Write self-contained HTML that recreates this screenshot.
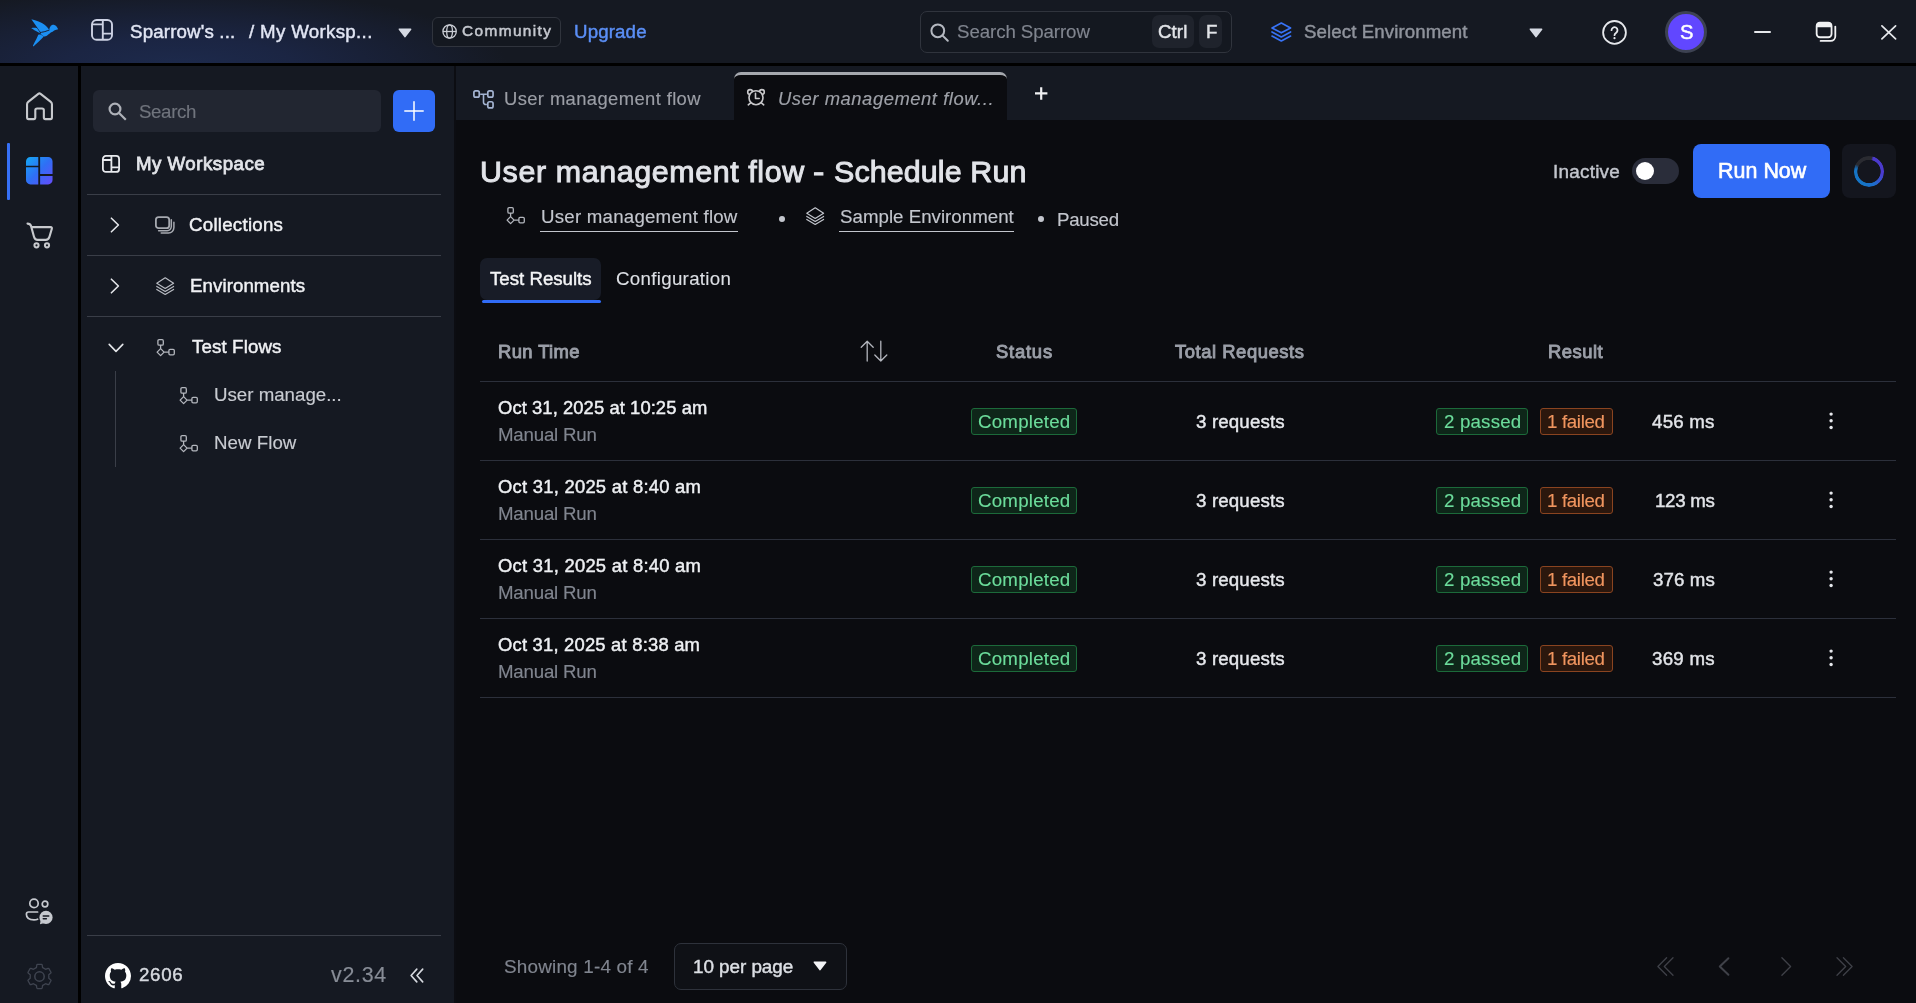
<!DOCTYPE html>
<html lang="en">
<head>
<meta charset="utf-8">
<title>Sparrow - User management flow - Schedule Run</title>
<style>
*{box-sizing:border-box;margin:0;padding:0}
html,body{width:1916px;height:1003px;overflow:hidden;background:#0b0c10}
body{font-family:"Liberation Sans",sans-serif;color:#e1e3e7;position:relative}
.a{position:absolute}
.t{position:absolute;white-space:nowrap;line-height:1;font-size:18px;will-change:transform}
svg{position:absolute;overflow:visible}
#hdr{left:0;top:0;width:1916px;height:63px;background:radial-gradient(ellipse 330px 78px at 178px 66px,#1d2a4c 0%,#1b2543 35%,#181f33 68%,#151922 100%)}
#hdrb{left:0;top:63px;width:1916px;height:3px;background:#000}
#rail{left:0;top:66px;width:78px;height:937px;background:#151922}
#railb{left:78px;top:66px;width:3px;height:937px;background:#000}
#side{left:81px;top:66px;width:374px;height:937px;background:#151922}
#sideb{left:454px;top:66px;width:2px;height:937px;background:#0c0d12}
#tabs{left:456px;top:66px;width:1460px;height:54px;background:#151922}
#main{left:456px;top:120px;width:1460px;height:883px;background:#0b0c10}
.hl{position:absolute;height:1px;background:#2b2f38}
</style>
</head>
<body>
<div class="a" id="hdr"></div>
<div class="a" id="hdrb"></div>
<div class="a" id="rail"></div>
<div class="a" id="railb"></div>
<div class="a" id="side"></div>
<div class="a" id="sideb"></div>
<div class="a" id="tabs"></div>
<div class="a" id="main"></div>

<!--HEADER-->
<svg style="left:24px;top:12px" width="42" height="42" viewBox="0 0 42 42" fill="#1b8ff2"><path d="M7.4 7.2C12 8.4 17.6 10.2 20.6 12.8C22.6 14.5 24.2 16.2 25 17.5L24.4 18.1C22 18.9 19.2 19.7 16.9 19.9L16 19.6Z"/><path d="M7.2 16.3C9 15.7 11.2 15.7 13.1 16.3L15.9 20.5L15.6 20.9C13.8 20 12 18.9 10.4 18.2C9.3 17.3 8.2 16.8 7.2 16.3Z"/><path d="M17 20.7C19.6 20.4 22.6 19.6 25.4 18.5C25.2 17.4 25.5 15.6 26.4 14.4C27.4 13.1 29 12.6 30.4 13C31.6 13.4 32.4 14.1 32.9 14.9L34.2 17.2L31.4 17.9L30.2 18.4C29.2 19.3 28 20 26.8 20.6C25.4 21.8 23.8 23.2 22.4 24C21.6 24.4 20.8 24.5 20 24.4C18.6 23.6 17.4 22.6 16.6 21.7Z"/><path d="M14.3 22.7C15.2 22.3 16 22.3 16.6 22.6C17.6 23.4 18.6 24 19.8 24.5C18.2 26.4 16.2 28.2 14.3 29.9C12.6 31.4 11 33 9.4 34.6L8.9 33.8C10 31.4 11.2 29 12.5 26.8C13.1 25.4 13.7 24 14.3 22.7Z"/></svg>
<svg style="left:91px;top:19.2px" width="22" height="22" viewBox="0 0 22 22" fill="none" stroke="#cdd2e4" stroke-width="1.9"><rect x="1" y="1" width="20" height="19.8" rx="4.6"/><path d="M11.8 1V20.8M1 5.4H11.8M11.8 14.6H21"/></svg>
<div class="t" id="t1" style="left:129.70px;top:23px;font-size:18.70px;color:#e2e6f4;letter-spacing:0.164px;-webkit-text-stroke:0.45px #e2e6f4;">Sparrow's ...</div>
<div class="t" id="t2" style="left:248.80px;top:23px;font-size:18.70px;color:#e2e6f4;letter-spacing:0.328px;-webkit-text-stroke:0.45px #e2e6f4;">/ My Worksp...</div>
<svg style="left:398.3px;top:27.8px" width="14" height="10" viewBox="0 0 14 10"><path d="M1.4 1.2H12.6L7 8.6Z" fill="#d5d9e3" stroke="#d5d9e3" stroke-width="1.6" stroke-linejoin="round"/></svg>
<div class="a" style="left:432.3px;top:17.3px;width:128.7px;height:29.4px;border:1px solid #30343d;border-radius:6px;background:#141820"></div>
<svg style="left:442.2px;top:23.7px" width="15.2" height="15" viewBox="0 0 15.2 15" fill="none" stroke="#c9ccd3" stroke-width="1.3"><circle cx="7.6" cy="7.5" r="6.7"/><ellipse cx="7.6" cy="7.5" rx="2.9" ry="6.7"/><path d="M1 7.5H14.2"/></svg>
<div class="t" id="t3" style="left:462.00px;top:23px;font-size:15.40px;color:#c4c7ce;letter-spacing:1.391px;-webkit-text-stroke:0.52px #c4c7ce;">Community</div>
<div class="t" id="t4" style="left:573.90px;top:23px;font-size:18.70px;color:#5b8ff6;letter-spacing:0.145px;-webkit-text-stroke:0.45px #5b8ff6;">Upgrade</div>
<div class="a" style="left:920px;top:11px;width:311.8px;height:41.7px;border:1px solid #30343d;border-radius:7px;background:#141820"></div>
<svg style="left:929.6px;top:22.6px" width="19" height="19" viewBox="0 0 19 19" fill="none" stroke="#b4b8c0" stroke-width="2" stroke-linecap="round"><circle cx="7.8" cy="7.8" r="6.4"/><path d="M12.6 12.6L17.8 17.8"/></svg>
<div class="t" id="t5" style="left:957.00px;top:23px;font-size:18.70px;color:#80858f;letter-spacing:-0.083px;-webkit-text-stroke:0.15px #80858f;">Search Sparrow</div>
<div class="a" style="left:1152.2px;top:15.1px;width:41.8px;height:32.8px;border-radius:7px;background:#1f232c"></div>
<div class="a" style="left:1198.9px;top:15.1px;width:22.9px;height:32.8px;border-radius:7px;background:#1f232c"></div>
<div class="t" id="t6" style="left:1158.40px;top:23px;font-size:18.70px;color:#e2e4e8;letter-spacing:0.073px;-webkit-text-stroke:0.45px #e2e4e8;">Ctrl</div>
<div class="t" id="t7" style="left:1205.50px;top:23px;font-size:18.70px;color:#e2e4e8;-webkit-text-stroke:0.45px #e2e4e8;">F</div>
<svg style="left:1271.2px;top:21.5px" width="20.6" height="20" viewBox="0 0 20.6 20" fill="none" stroke="#3873f7" stroke-width="1.7" stroke-linejoin="round" stroke-linecap="round"><path d="M10.3 1L19.6 5.9L10.3 10.8L1 5.9Z"/><path d="M1 10L10.3 14.9L19.6 10M1 14.1L10.3 19L19.6 14.1"/></svg>
<div class="t" id="t8" style="left:1304.00px;top:23px;font-size:18.70px;color:#8f939c;letter-spacing:0.085px;-webkit-text-stroke:0.45px #8f939c;">Select Environment</div>
<svg style="left:1528.8px;top:27.7px" width="14" height="10" viewBox="0 0 14 10"><path d="M1.4 1.2H12.6L7 8.6Z" fill="#d5d9e3" stroke="#d5d9e3" stroke-width="1.6" stroke-linejoin="round"/></svg>
<svg style="left:1601.5px;top:19.5px" width="25" height="25" viewBox="0 0 25 25" fill="none" stroke="#e6e8ec" stroke-width="1.8" stroke-linecap="round"><circle cx="12.5" cy="12.4" r="11.4"/><path d="M9.5 10.2a3 3 0 1 1 4.7 2.5c-1 .7-1.7 1.2-1.7 2.5"/><circle cx="12.5" cy="18.2" r="0.5" fill="#e6e8ec" stroke-width="1.2"/></svg>
<div class="a" style="left:1665px;top:10.8px;width:42px;height:42px;border-radius:50%;background:#6147ff;border:3.1px solid #3d4252"></div>
<div class="t" id="t9" style="left:1679.60px;top:22px;font-size:20.20px;color:#fff;-webkit-text-stroke:0.48px #fff;">S</div>
<div class="a" style="left:1753.6px;top:31px;width:17.6px;height:1.8px;background:#e6e8ec;border-radius:1px"></div>
<svg style="left:1814.5px;top:21px" width="22" height="22" viewBox="0 0 22 22" fill="none" stroke="#f0f1f3" stroke-width="1.8"><rect x="1.65" y="1.7" width="14.9" height="14.55" rx="3.3"/><path d="M1.2 6.3V4.6A3.4 3.4 0 0 1 4.6 1.2H13.6A3.4 3.4 0 0 1 17 4.6V6.3Z" fill="#f0f1f3" stroke="none"/><path d="M20.3 5.6V15.2A4.7 4.7 0 0 1 15.6 19.9H5.6" stroke-linecap="round"/></svg>
<svg style="left:1881px;top:24.6px" width="16" height="15" viewBox="0 0 16 15" fill="none" stroke="#e6e8ec" stroke-width="1.7" stroke-linecap="round"><path d="M0.9 0.8L14.6 13.8M14.6 0.8L0.9 13.8"/></svg>
<!--/HEADER-->
<!--RAIL-->
<svg style="left:25px;top:91px" width="29" height="30" viewBox="0 0 29 30" fill="none" stroke="#c7c9cd" stroke-width="2.1" stroke-linejoin="round"><path d="M2.05 13.2Q2.05 11.8 3.2 10.9L13.3 2.9Q14.45 2 15.6 2.9L25.8 10.9Q26.95 11.8 26.95 13.2V26.6Q26.95 28.1 25.45 28.1H20.4Q18.85 28.1 18.85 26.6V19.3Q18.85 17.5 17.05 17.5H12.1Q10.3 17.5 10.3 19.3V26.6Q10.3 28.1 8.8 28.1H3.55Q2.05 28.1 2.05 26.6Z"/></svg>
<div class="a" style="left:7px;top:143px;width:3px;height:57px;background:#3670f6;border-radius:1px"></div>
<svg style="left:25.85px;top:157px" width="26.55" height="27.4" viewBox="0 0 26.55 27.4"><defs><linearGradient id="wg" x1="0" y1="0" x2="1" y2="1"><stop offset="0" stop-color="#15a8f4"/><stop offset="0.5" stop-color="#2f6ff5"/><stop offset="1" stop-color="#664cfb"/></linearGradient></defs><path fill="url(#wg)" d="M4.4 0H12.28V8.77H0V4.4A4.4 4.4 0 0 1 4.4 0ZM0 10.3H12.28V27.4H4.4A4.4 4.4 0 0 1 0 23ZM14.13 0H22.15A4.4 4.4 0 0 1 26.55 4.4V16.9H14.13ZM14.13 19H26.55V23A4.4 4.4 0 0 1 22.15 27.4H14.13Z"/></svg>
<svg style="left:26px;top:222px" width="28" height="27" viewBox="0 0 28 27" fill="none" stroke="#c7c9cd" stroke-width="2.1" stroke-linecap="round" stroke-linejoin="round"><path d="M1.5 1.6C3.4 1.6 4.5 2.2 5 3.9L8 14.8C8.6 16.9 9.6 17.9 11.6 17.9H19.8C21.7 17.9 22.7 17 23.3 15.2L25.8 6.9C26.2 5.6 25.7 5.1 24.6 5.1H5.6"/><circle cx="10.5" cy="23.3" r="2.1" stroke-width="2"/><circle cx="21" cy="23.3" r="2.1" stroke-width="2"/></svg>
<svg style="left:25px;top:897px" width="30" height="29" viewBox="0 0 30 29" fill="none" stroke="#c6c9cf" stroke-width="1.7" stroke-linecap="round"><circle cx="9" cy="6.4" r="4.2"/><circle cx="20" cy="7" r="2.8"/><path d="M12.6 15H3.6A2.2 2.2 0 0 0 1.4 17.2C1.4 20.6 4 22.8 9 22.8C10.4 22.8 11.6 22.6 12.6 22.2"/><circle cx="21" cy="20.4" r="6.6" fill="#c6c9cf" stroke="none"/><path d="M15 27.2L15.6 23.4L18.6 26.2Z" fill="#c6c9cf" stroke="none"/><path d="M18.2 19H23.8M18.2 21.8H21.4" stroke="#151922" stroke-width="1.4"/></svg>
<svg style="left:26px;top:962.7px" width="27" height="27" viewBox="0 0 27 27" fill="none" stroke="#3f4450" stroke-width="1.5" stroke-linejoin="round"><path d="M11.45 2.08L15.55 2.08L15.98 4.95L19.66 7.08L22.36 6.01L24.41 9.57L22.14 11.38L22.14 15.62L24.41 17.43L22.36 20.99L19.66 19.92L15.98 22.05L15.55 24.92L11.45 24.92L11.02 22.05L7.34 19.92L4.64 20.99L2.59 17.43L4.86 15.62L4.86 11.38L2.59 9.57L4.64 6.01L7.34 7.08L11.02 4.95Z" stroke-width="2.6"/><path d="M11.45 2.08L15.55 2.08L15.98 4.95L19.66 7.08L22.36 6.01L24.41 9.57L22.14 11.38L22.14 15.62L24.41 17.43L22.36 20.99L19.66 19.92L15.98 22.05L15.55 24.92L11.45 24.92L11.02 22.05L7.34 19.92L4.64 20.99L2.59 17.43L4.86 15.62L4.86 11.38L2.59 9.57L4.64 6.01L7.34 7.08L11.02 4.95Z" stroke="#151922" stroke-width="0" fill="#151922"/><circle cx="13.5" cy="13.5" r="4.7"/></svg>
<!--/RAIL-->
<!--SIDEBAR-->
<div class="a" style="left:93px;top:90px;width:288px;height:42px;border-radius:6px;background:#222631"></div>
<svg style="left:108px;top:102px" width="19" height="19" viewBox="0 0 19 19" fill="none" stroke="#aeb1b8" stroke-width="2.2"><circle cx="7" cy="7" r="5.4"/><path d="M11 11L17.8 17.8"/></svg>
<div class="t" id="t1" style="left:138.90px;top:103px;font-size:18.70px;color:#70747d;letter-spacing:-0.370px;-webkit-text-stroke:0.15px #70747d;">Search</div>
<div class="a" style="left:393px;top:90px;width:42.3px;height:42px;border-radius:6px;background:#316cf6"></div>
<svg style="left:403.5px;top:100.6px" width="20" height="20" viewBox="0 0 20 20" fill="none" stroke="#fff" stroke-width="1.5" stroke-linecap="round"><path d="M10 0.8V19.2M0.8 10H19.2"/></svg>
<svg style="left:102px;top:154.6px" width="18" height="18" viewBox="0 0 18 18" fill="none" stroke="#e8eaee" stroke-width="1.8"><rect x="0.9" y="0.9" width="16.2" height="16" rx="3"/><path d="M9.4 0.9V16.9M0.9 5H9.4M9.4 12.4H17.1"/></svg>
<div class="t" id="t2" style="left:135.50px;top:155px;font-size:18.70px;color:#e2e4e9;letter-spacing:0.490px;-webkit-text-stroke:0.79px #e2e4e9;">My Workspace</div>
<div class="hl" style="left:87px;top:194px;width:354px;background:#3a3e48"></div>
<div class="hl" style="left:87px;top:255px;width:354px;background:#3a3e48"></div>
<div class="hl" style="left:87px;top:316px;width:354px;background:#3a3e48"></div>
<div class="hl" style="left:87px;top:935px;width:354px;background:#3a3e48"></div>
<svg style="left:110.2px;top:217.2px" width="10" height="16" viewBox="0 0 10 16" fill="none" stroke="#e4e6ea" stroke-width="1.6" stroke-linecap="round" stroke-linejoin="round"><path d="M1.4 1.2L8.4 8L1.4 14.8"/></svg>
<svg style="left:110.2px;top:278.2px" width="10" height="16" viewBox="0 0 10 16" fill="none" stroke="#e4e6ea" stroke-width="1.6" stroke-linecap="round" stroke-linejoin="round"><path d="M1.4 1.2L8.4 8L1.4 14.8"/></svg>
<svg style="left:108px;top:343px" width="16" height="10" viewBox="0 0 16 10" fill="none" stroke="#e4e6ea" stroke-width="1.6" stroke-linecap="round" stroke-linejoin="round"><path d="M1.2 1.4L8 8.4L14.8 1.4"/></svg>
<svg style="left:154px;top:215px" width="22" height="20" viewBox="0 0 22 20" fill="none" stroke="#a6a9b0" stroke-width="1.5" stroke-linecap="round"><rect x="1.9" y="2.1" width="13.3" height="11" rx="2.7" stroke-width="1.8"/><path d="M17.3 4.8V11.6A4.1 4.1 0 0 1 13.2 15.7H4.6"/><path d="M19.9 7.2V12.6A5.4 5.4 0 0 1 14.5 18H7.2"/></svg>
<div class="t" id="t3" style="left:189.40px;top:216px;font-size:18.70px;color:#f0f1f4;letter-spacing:0.254px;-webkit-text-stroke:0.45px #f0f1f4;">Collections</div>
<svg style="left:156px;top:277px" width="18.4" height="18" viewBox="0 0 18.4 18" fill="none" stroke="#b9bcc3" stroke-width="1.2" stroke-linejoin="round" stroke-linecap="round"><path d="M9.2 0.8L17.6 6.2L9.2 11.4L0.8 6.2Z"/><path d="M0.8 9.4L9.2 14.4L17.6 9.4M0.8 12.4L9.2 17.4L17.6 12.4"/></svg>
<div class="t" id="t4" style="left:189.50px;top:277px;font-size:18.70px;color:#f0f1f4;letter-spacing:0.070px;-webkit-text-stroke:0.45px #f0f1f4;">Environments</div>
<svg style="left:157.3px;top:338.6px" width="18" height="17.4" viewBox="0 0 18 17.4" fill="none" stroke="#b3b6bd" stroke-width="1.3" stroke-linejoin="round"><rect x="0.9" y="0.7" width="5.4" height="5.4" rx="1.2"/><path d="M3.6 6.1V9.6M3.6 9.6L7.1 13.1L3.6 16.6L0.1 13.1ZM7.1 13.1H11.9"/><rect x="11.9" y="10.4" width="5.4" height="5.4" rx="1.2"/></svg>
<div class="t" id="t5" style="left:191.50px;top:338px;font-size:18.70px;color:#f0f1f4;letter-spacing:0.131px;-webkit-text-stroke:0.45px #f0f1f4;">Test Flows</div>
<div class="a" style="left:115px;top:371px;width:1px;height:96px;background:#3a3e48"></div>
<svg style="left:180px;top:386.5px" width="18" height="17.4" viewBox="0 0 18 17.4" fill="none" stroke="#b3b6bd" stroke-width="1.3" stroke-linejoin="round"><rect x="0.9" y="0.7" width="5.4" height="5.4" rx="1.2"/><path d="M3.6 6.1V9.6M3.6 9.6L7.1 13.1L3.6 16.6L0.1 13.1ZM7.1 13.1H11.9"/><rect x="11.9" y="10.4" width="5.4" height="5.4" rx="1.2"/></svg>
<div class="t" id="t6" style="left:213.50px;top:386px;font-size:18.70px;color:#c8cbd1;-webkit-text-stroke:0.15px #c8cbd1;">User manage...</div>
<svg style="left:180px;top:434.5px" width="18" height="17.4" viewBox="0 0 18 17.4" fill="none" stroke="#b3b6bd" stroke-width="1.3" stroke-linejoin="round"><rect x="0.9" y="0.7" width="5.4" height="5.4" rx="1.2"/><path d="M3.6 6.1V9.6M3.6 9.6L7.1 13.1L3.6 16.6L0.1 13.1ZM7.1 13.1H11.9"/><rect x="11.9" y="10.4" width="5.4" height="5.4" rx="1.2"/></svg>
<div class="t" id="t7" style="left:213.50px;top:434px;font-size:18.70px;color:#c8cbd1;letter-spacing:0.045px;-webkit-text-stroke:0.15px #c8cbd1;">New Flow</div>
<svg style="left:105px;top:962.6px" width="26" height="26" viewBox="0 0 16 16"><path fill="#fff" d="M8 0C3.58 0 0 3.58 0 8c0 3.54 2.29 6.53 5.47 7.59.4.07.55-.17.55-.38 0-.19-.01-.82-.01-1.49-2.01.37-2.53-.49-2.69-.94-.09-.23-.48-.94-.82-1.13-.28-.15-.68-.52-.01-.53.63-.01 1.08.58 1.23.82.72 1.21 1.87.87 2.33.66.07-.52.28-.87.51-1.07-1.78-.2-3.64-.89-3.64-3.95 0-.87.31-1.59.82-2.15-.08-.2-.36-1.02.08-2.12 0 0 .67-.21 2.2.82.64-.18 1.32-.27 2-.27s1.36.09 2 .27c1.53-1.04 2.2-.82 2.2-.82.44 1.1.16 1.92.08 2.12.51.56.82 1.27.82 2.15 0 3.07-1.87 3.75-3.65 3.95.29.25.54.73.54 1.48 0 1.07-.01 1.93-.01 2.2 0 .21.15.46.55.38A8.01 8.01 0 0 0 16 8c0-4.42-3.58-8-8-8Z"/></svg>
<div class="t" id="t8" style="left:138.80px;top:966px;font-size:18.70px;color:#d6d9df;letter-spacing:0.700px;-webkit-text-stroke:0.45px #d6d9df;">2606</div>
<div class="t" id="t9" style="left:330.90px;top:965px;font-size:21.40px;color:#878c96;letter-spacing:0.712px;-webkit-text-stroke:0.17px #878c96;">v2.34</div>
<svg style="left:410.2px;top:968.2px" width="14" height="15" viewBox="0 0 14 15" fill="none" stroke="#d6d9df" stroke-width="1.6" stroke-linecap="round" stroke-linejoin="round"><path d="M6.8 1.1L1.1 7.5L6.8 13.9M12.7 1.1L7 7.5L12.7 13.9"/></svg>
<!--/SIDEBAR-->
<!--TABS-->
<svg style="left:472px;top:89px" width="23" height="21" viewBox="0 0 23 21" fill="none" stroke="#a4b4d2" stroke-width="1.7" stroke-linejoin="round"><rect x="1.9" y="1.9" width="5.35" height="6.2" rx="1.7"/><rect x="15.8" y="1.9" width="5.25" height="6.2" rx="1.7"/><rect x="15.8" y="12.75" width="5.25" height="6.2" rx="1.7"/><path d="M8.2 5.2H14.85M11.5 5.2V13.2A2.3 2.3 0 0 0 13.8 15.5H14.85" stroke-width="1.6"/></svg>
<div class="t" id="t1" style="left:504.30px;top:90px;font-size:18.40px;color:#9b9ea6;letter-spacing:0.390px;-webkit-text-stroke:0.15px #9b9ea6;">User management flow</div>
<div class="a" style="left:734px;top:72px;width:273px;height:48px;background:#0b0c10;border-top:3px solid #a5a8ae;border-radius:7px 7px 0 0"></div>
<svg style="left:746px;top:88px" width="20" height="18" viewBox="0 0 20 18" fill="none" stroke="#c9c9cb" stroke-width="1.6" stroke-linecap="round" stroke-linejoin="round"><circle cx="4.1" cy="4" r="2.4"/><circle cx="15.9" cy="4" r="2.4"/><circle cx="10" cy="9.7" r="7" fill="#0b0c10"/><path d="M9.5 5.4V10.5H13.2M4.9 14.6L2.3 16.8M15.1 14.6L17.7 16.8"/></svg>
<div class="t" id="t2" style="left:777.50px;top:90px;font-size:18.40px;color:#9ea1a8;letter-spacing:0.549px;font-style:italic;-webkit-text-stroke:0.15px #9ea1a8;">User management flow...</div>
<svg style="left:1035px;top:86.6px" width="13" height="13" viewBox="0 0 13 13" fill="none" stroke="#f0f1f3" stroke-width="2.2"><path d="M6.2 0.2V12.8M0 6.4H12.4"/></svg>
<!--/TABS-->
<!--CONTENT-->
<div class="t" id="t3" style="left:480.20px;top:156px;font-size:30.40px;color:#e2e4e9;letter-spacing:0.617px;-webkit-text-stroke:0.97px #e2e4e9;">User management flow</div>
<div class="t" id="t4" style="left:813.00px;top:156px;font-size:30.40px;color:#e2e4e9;-webkit-text-stroke:0.97px #e2e4e9;transform:scaleX(1.12);transform-origin:0 0;">-</div>
<div class="t" id="t5" style="left:834.00px;top:156px;font-size:30.40px;color:#e2e4e9;letter-spacing:0.129px;-webkit-text-stroke:0.97px #e2e4e9;">Schedule Run</div>
<svg style="left:506.8px;top:207.3px" width="18" height="17.4" viewBox="0 0 18 17.4" fill="none" stroke="#b3b6bd" stroke-width="1.3" stroke-linejoin="round"><rect x="0.9" y="0.7" width="5.4" height="5.4" rx="1.2"/><path d="M3.6 6.1V9.6M3.6 9.6L7.1 13.1L3.6 16.6L0.1 13.1ZM7.1 13.1H11.9"/><rect x="11.9" y="10.4" width="5.4" height="5.4" rx="1.2"/></svg>
<div class="t" id="t6" style="left:540.60px;top:208px;font-size:18.70px;color:#c3c6cd;letter-spacing:0.222px;-webkit-text-stroke:0.15px #c3c6cd;">User management flow</div>
<div class="a" style="left:540px;top:230.6px;width:198px;height:1.5px;background:#c3c6cd"></div>
<div class="a" style="left:779px;top:216.4px;width:5.8px;height:5.8px;border-radius:50%;background:#c3c6cd"></div>
<svg style="left:806px;top:207px" width="18.4" height="18" viewBox="0 0 18.4 18" fill="none" stroke="#c3c6cd" stroke-width="1.2" stroke-linejoin="round" stroke-linecap="round"><path d="M9.2 0.8L17.6 6.2L9.2 11.4L0.8 6.2Z"/><path d="M0.8 9.4L9.2 14.4L17.6 9.4M0.8 12.4L9.2 17.4L17.6 12.4"/></svg>
<div class="t" id="t7" style="left:839.70px;top:208px;font-size:18.70px;color:#c3c6cd;letter-spacing:0.019px;-webkit-text-stroke:0.15px #c3c6cd;">Sample Environment</div>
<div class="a" style="left:839px;top:230.6px;width:175px;height:1.5px;background:#c3c6cd"></div>
<div class="a" style="left:1037.9px;top:216.4px;width:5.8px;height:5.8px;border-radius:50%;background:#c3c6cd"></div>
<div class="t" id="t8" style="left:1057.10px;top:211px;font-size:18.70px;color:#c3c6cd;letter-spacing:-0.265px;-webkit-text-stroke:0.15px #c3c6cd;">Paused</div>
<div class="t" id="t9" style="left:1553.30px;top:163px;font-size:18.90px;color:#c3c6cd;letter-spacing:0.238px;-webkit-text-stroke:0.45px #c3c6cd;">Inactive</div>
<div class="a" style="left:1632.2px;top:158px;width:46.8px;height:26px;border-radius:13px;background:#2a2d3a"></div>
<div class="a" style="left:1635.6px;top:161.8px;width:18.6px;height:18.6px;border-radius:50%;background:#fff"></div>
<div class="a" style="left:1693px;top:144px;width:137px;height:54px;border-radius:8px;background:#316cf6"></div>
<div class="t" id="t10" style="left:1717.60px;top:161px;font-size:21.40px;color:#fff;letter-spacing:0.048px;-webkit-text-stroke:0.64px #fff;">Run Now</div>
<div class="a" style="left:1842px;top:144px;width:54px;height:54px;border-radius:8px;background:#14161e"></div>
<div class="a" style="left:1853.5px;top:156.3px;width:30.4px;height:30.4px;border-radius:50%;background:conic-gradient(from 0deg,#2a2b31 0deg,#2a2b31 10deg,#4b39c9 18deg,#4b3bd0 100deg,#3a4fd0 125deg,#1f6ccb 155deg,#1675c6 200deg,#1674c4 280deg,#1f4c78 292deg,#2a2b31 300deg,#2a2b31 360deg);-webkit-mask:radial-gradient(circle,transparent 11.3px,#000 12px);mask:radial-gradient(circle,transparent 11.3px,#000 12px)"></div>
<div class="a" style="left:480px;top:258px;width:121px;height:42px;border-radius:7px;background:#181c27"></div>
<div class="a" style="left:482px;top:299.6px;width:119px;height:3.4px;border-radius:2px;background:#316cf6"></div>
<div class="t" id="t11" style="left:489.90px;top:270px;font-size:18.70px;color:#f3f4f6;letter-spacing:-0.013px;-webkit-text-stroke:0.45px #f3f4f6;">Test Results</div>
<div class="t" id="t12" style="left:616.40px;top:270px;font-size:18.70px;color:#dcdfe4;letter-spacing:0.314px;-webkit-text-stroke:0.15px #dcdfe4;">Configuration</div>
<!--/CONTENT-->
<!--TABLE-->
<div class="t" id="t13" style="left:498.40px;top:343px;font-size:18.40px;color:#9b9fa8;letter-spacing:0.409px;-webkit-text-stroke:0.92px #9b9fa8;">Run Time</div>
<svg style="left:860px;top:340px" width="28" height="22" viewBox="0 0 28 22" fill="none" stroke="#b3b6bd" stroke-width="1.3" stroke-linecap="round" stroke-linejoin="round"><path d="M7.2 21V1.2M1.2 7.2L7.2 1.2L13.2 7.2M20.8 1.2V21M14.8 15L20.8 21L26.8 15"/></svg>
<div class="t" id="t14" style="left:995.90px;top:343px;font-size:18.40px;color:#9b9fa8;letter-spacing:0.787px;-webkit-text-stroke:0.92px #9b9fa8;">Status</div>
<div class="t" id="t15" style="left:1175.40px;top:343px;font-size:18.40px;color:#9b9fa8;letter-spacing:0.553px;-webkit-text-stroke:0.92px #9b9fa8;">Total Requests</div>
<div class="t" id="t16" style="left:1548.10px;top:343px;font-size:18.40px;color:#9b9fa8;letter-spacing:0.509px;-webkit-text-stroke:0.92px #9b9fa8;">Result</div>
<div class="hl" style="left:480px;top:381px;width:1416px;background:#2c303b"></div>
<div class="hl" style="left:480px;top:460px;width:1416px;background:#2c303b"></div>
<div class="hl" style="left:480px;top:539px;width:1416px;background:#2c303b"></div>
<div class="hl" style="left:480px;top:618px;width:1416px;background:#2c303b"></div>
<div class="hl" style="left:480px;top:697px;width:1416px;background:#2c303b"></div>
<div class="t" id="t17" style="left:498.40px;top:399px;font-size:18.40px;color:#eef0f3;letter-spacing:0.076px;-webkit-text-stroke:0.44px #eef0f3;">Oct 31, 2025 at 10:25 am</div>
<div class="t" id="t18" style="left:498.40px;top:426px;font-size:18.70px;color:#80858f;letter-spacing:-0.204px;-webkit-text-stroke:0.15px #80858f;">Manual Run</div>
<div class="a" style="left:971px;top:408px;width:106px;height:27px;border:1px solid #1c6a3a;border-radius:3px;background:#0e2619"></div>
<div class="t" id="t19" style="left:978.10px;top:413px;font-size:18.70px;color:#6cdc9b;letter-spacing:0.233px;-webkit-text-stroke:0.15px #6cdc9b;">Completed</div>
<div class="t" id="t20" style="left:1195.50px;top:413px;font-size:18.70px;color:#e6e8ec;letter-spacing:0.153px;-webkit-text-stroke:0.45px #e6e8ec;">3 requests</div>
<div class="a" style="left:1436px;top:408px;width:92px;height:27px;border:1px solid #1c6a3a;border-radius:3px;background:#0e2619"></div>
<div class="t" id="t21" style="left:1443.60px;top:413px;font-size:18.70px;color:#6cdc9b;letter-spacing:0.186px;-webkit-text-stroke:0.15px #6cdc9b;">2 passed</div>
<div class="a" style="left:1540px;top:408px;width:73px;height:27px;border:1px solid #8a4420;border-radius:3px;background:#2b170d"></div>
<div class="t" id="t22" style="left:1547.40px;top:413px;font-size:18.70px;color:#f0955f;letter-spacing:-0.329px;-webkit-text-stroke:0.15px #f0955f;">1 failed</div>
<div class="t" id="t23" style="left:1652.10px;top:413px;font-size:18.70px;color:#e2e4e8;letter-spacing:0.235px;-webkit-text-stroke:0.45px #e2e4e8;">456 ms</div>
<svg style="left:1828px;top:411px" width="6" height="19" viewBox="0 0 6 19" fill="#e6e8ec"><circle cx="3.1" cy="3.1" r="1.7"/><circle cx="3.1" cy="9.8" r="1.7"/><circle cx="3.1" cy="16.5" r="1.7"/></svg>
<div class="t" id="t24" style="left:498.40px;top:478px;font-size:18.40px;color:#eef0f3;letter-spacing:0.254px;-webkit-text-stroke:0.44px #eef0f3;">Oct 31, 2025 at 8:40 am</div>
<div class="t" id="t25" style="left:498.40px;top:505px;font-size:18.70px;color:#80858f;letter-spacing:-0.204px;-webkit-text-stroke:0.15px #80858f;">Manual Run</div>
<div class="a" style="left:971px;top:487px;width:106px;height:27px;border:1px solid #1c6a3a;border-radius:3px;background:#0e2619"></div>
<div class="t" id="t26" style="left:978.10px;top:492px;font-size:18.70px;color:#6cdc9b;letter-spacing:0.233px;-webkit-text-stroke:0.15px #6cdc9b;">Completed</div>
<div class="t" id="t27" style="left:1195.50px;top:492px;font-size:18.70px;color:#e6e8ec;letter-spacing:0.153px;-webkit-text-stroke:0.45px #e6e8ec;">3 requests</div>
<div class="a" style="left:1436px;top:487px;width:92px;height:27px;border:1px solid #1c6a3a;border-radius:3px;background:#0e2619"></div>
<div class="t" id="t28" style="left:1443.60px;top:492px;font-size:18.70px;color:#6cdc9b;letter-spacing:0.186px;-webkit-text-stroke:0.15px #6cdc9b;">2 passed</div>
<div class="a" style="left:1540px;top:487px;width:73px;height:27px;border:1px solid #8a4420;border-radius:3px;background:#2b170d"></div>
<div class="t" id="t29" style="left:1547.40px;top:492px;font-size:18.70px;color:#f0955f;letter-spacing:-0.329px;-webkit-text-stroke:0.15px #f0955f;">1 failed</div>
<div class="t" id="t30" style="left:1654.78px;top:492px;font-size:18.70px;color:#e2e4e8;letter-spacing:-0.300px;-webkit-text-stroke:0.45px #e2e4e8;">123 ms</div>
<svg style="left:1828px;top:490px" width="6" height="19" viewBox="0 0 6 19" fill="#e6e8ec"><circle cx="3.1" cy="3.1" r="1.7"/><circle cx="3.1" cy="9.8" r="1.7"/><circle cx="3.1" cy="16.5" r="1.7"/></svg>
<div class="t" id="t31" style="left:498.40px;top:557px;font-size:18.40px;color:#eef0f3;letter-spacing:0.254px;-webkit-text-stroke:0.44px #eef0f3;">Oct 31, 2025 at 8:40 am</div>
<div class="t" id="t32" style="left:498.40px;top:584px;font-size:18.70px;color:#80858f;letter-spacing:-0.204px;-webkit-text-stroke:0.15px #80858f;">Manual Run</div>
<div class="a" style="left:971px;top:566px;width:106px;height:27px;border:1px solid #1c6a3a;border-radius:3px;background:#0e2619"></div>
<div class="t" id="t33" style="left:978.10px;top:571px;font-size:18.70px;color:#6cdc9b;letter-spacing:0.233px;-webkit-text-stroke:0.15px #6cdc9b;">Completed</div>
<div class="t" id="t34" style="left:1195.50px;top:571px;font-size:18.70px;color:#e6e8ec;letter-spacing:0.153px;-webkit-text-stroke:0.45px #e6e8ec;">3 requests</div>
<div class="a" style="left:1436px;top:566px;width:92px;height:27px;border:1px solid #1c6a3a;border-radius:3px;background:#0e2619"></div>
<div class="t" id="t35" style="left:1443.60px;top:571px;font-size:18.70px;color:#6cdc9b;letter-spacing:0.186px;-webkit-text-stroke:0.15px #6cdc9b;">2 passed</div>
<div class="a" style="left:1540px;top:566px;width:73px;height:27px;border:1px solid #8a4420;border-radius:3px;background:#2b170d"></div>
<div class="t" id="t36" style="left:1547.40px;top:571px;font-size:18.70px;color:#f0955f;letter-spacing:-0.329px;-webkit-text-stroke:0.15px #f0955f;">1 failed</div>
<div class="t" id="t37" style="left:1652.80px;top:571px;font-size:18.70px;color:#e2e4e8;letter-spacing:0.095px;-webkit-text-stroke:0.45px #e2e4e8;">376 ms</div>
<svg style="left:1828px;top:569px" width="6" height="19" viewBox="0 0 6 19" fill="#e6e8ec"><circle cx="3.1" cy="3.1" r="1.7"/><circle cx="3.1" cy="9.8" r="1.7"/><circle cx="3.1" cy="16.5" r="1.7"/></svg>
<div class="t" id="t38" style="left:498.40px;top:636px;font-size:18.40px;color:#eef0f3;letter-spacing:0.208px;-webkit-text-stroke:0.44px #eef0f3;">Oct 31, 2025 at 8:38 am</div>
<div class="t" id="t39" style="left:498.40px;top:663px;font-size:18.70px;color:#80858f;letter-spacing:-0.204px;-webkit-text-stroke:0.15px #80858f;">Manual Run</div>
<div class="a" style="left:971px;top:645px;width:106px;height:27px;border:1px solid #1c6a3a;border-radius:3px;background:#0e2619"></div>
<div class="t" id="t40" style="left:978.10px;top:650px;font-size:18.70px;color:#6cdc9b;letter-spacing:0.233px;-webkit-text-stroke:0.15px #6cdc9b;">Completed</div>
<div class="t" id="t41" style="left:1195.50px;top:650px;font-size:18.70px;color:#e6e8ec;letter-spacing:0.153px;-webkit-text-stroke:0.45px #e6e8ec;">3 requests</div>
<div class="a" style="left:1436px;top:645px;width:92px;height:27px;border:1px solid #1c6a3a;border-radius:3px;background:#0e2619"></div>
<div class="t" id="t42" style="left:1443.60px;top:650px;font-size:18.70px;color:#6cdc9b;letter-spacing:0.186px;-webkit-text-stroke:0.15px #6cdc9b;">2 passed</div>
<div class="a" style="left:1540px;top:645px;width:73px;height:27px;border:1px solid #8a4420;border-radius:3px;background:#2b170d"></div>
<div class="t" id="t43" style="left:1547.40px;top:650px;font-size:18.70px;color:#f0955f;letter-spacing:-0.329px;-webkit-text-stroke:0.15px #f0955f;">1 failed</div>
<div class="t" id="t44" style="left:1651.90px;top:650px;font-size:18.70px;color:#e2e4e8;letter-spacing:0.275px;-webkit-text-stroke:0.45px #e2e4e8;">369 ms</div>
<svg style="left:1828px;top:648px" width="6" height="19" viewBox="0 0 6 19" fill="#e6e8ec"><circle cx="3.1" cy="3.1" r="1.7"/><circle cx="3.1" cy="9.8" r="1.7"/><circle cx="3.1" cy="16.5" r="1.7"/></svg>
<!--/TABLE-->
<!--FOOTER-->
<div class="t" id="t45" style="left:504.40px;top:958px;font-size:18.90px;color:#80858f;letter-spacing:0.190px;-webkit-text-stroke:0.15px #80858f;">Showing 1-4 of 4</div>
<div class="a" style="left:674px;top:943.4px;width:173px;height:46.3px;border:1px solid #2e323b;border-radius:7px;background:#0f1116"></div>
<div class="t" id="t46" style="left:692.90px;top:958px;font-size:18.90px;color:#dcdfe4;letter-spacing:-0.059px;-webkit-text-stroke:0.45px #dcdfe4;">10 per page</div>
<svg style="left:813px;top:961.4px" width="14" height="10" viewBox="0 0 14 10"><path d="M1.4 1.2H12.6L7 8.6Z" fill="#f3f4f6" stroke="#f3f4f6" stroke-width="1.6" stroke-linejoin="round"/></svg>
<svg style="left:1657px;top:956.5px" width="17" height="19" viewBox="0 0 17 19" fill="none" stroke="#3f4148" stroke-width="1.3" stroke-linecap="round" stroke-linejoin="round"><path d="M9.6 0.8L0.9 9.5L9.6 18.2M16 0.8L7.3 9.5L16 18.2"/></svg>
<svg style="left:1718px;top:956.5px" width="12" height="19" viewBox="0 0 12 19" fill="none" stroke="#3f4148" stroke-width="2" stroke-linecap="round" stroke-linejoin="round"><path d="M10.4 1.2L1.8 9.5L10.4 17.8"/></svg>
<svg style="left:1780.6px;top:956.5px" width="11" height="19" viewBox="0 0 11 19" fill="none" stroke="#3f4148" stroke-width="1.3" stroke-linecap="round" stroke-linejoin="round"><path d="M0.9 0.8L9.6 9.5L0.9 18.2"/></svg>
<svg style="left:1836px;top:956.5px" width="17" height="19" viewBox="0 0 17 19" fill="none" stroke="#3f4148" stroke-width="1.3" stroke-linecap="round" stroke-linejoin="round"><path d="M1 0.8L9.7 9.5L1 18.2M7.4 0.8L16.1 9.5L7.4 18.2"/></svg>
<!--/FOOTER-->
</body>
</html>
